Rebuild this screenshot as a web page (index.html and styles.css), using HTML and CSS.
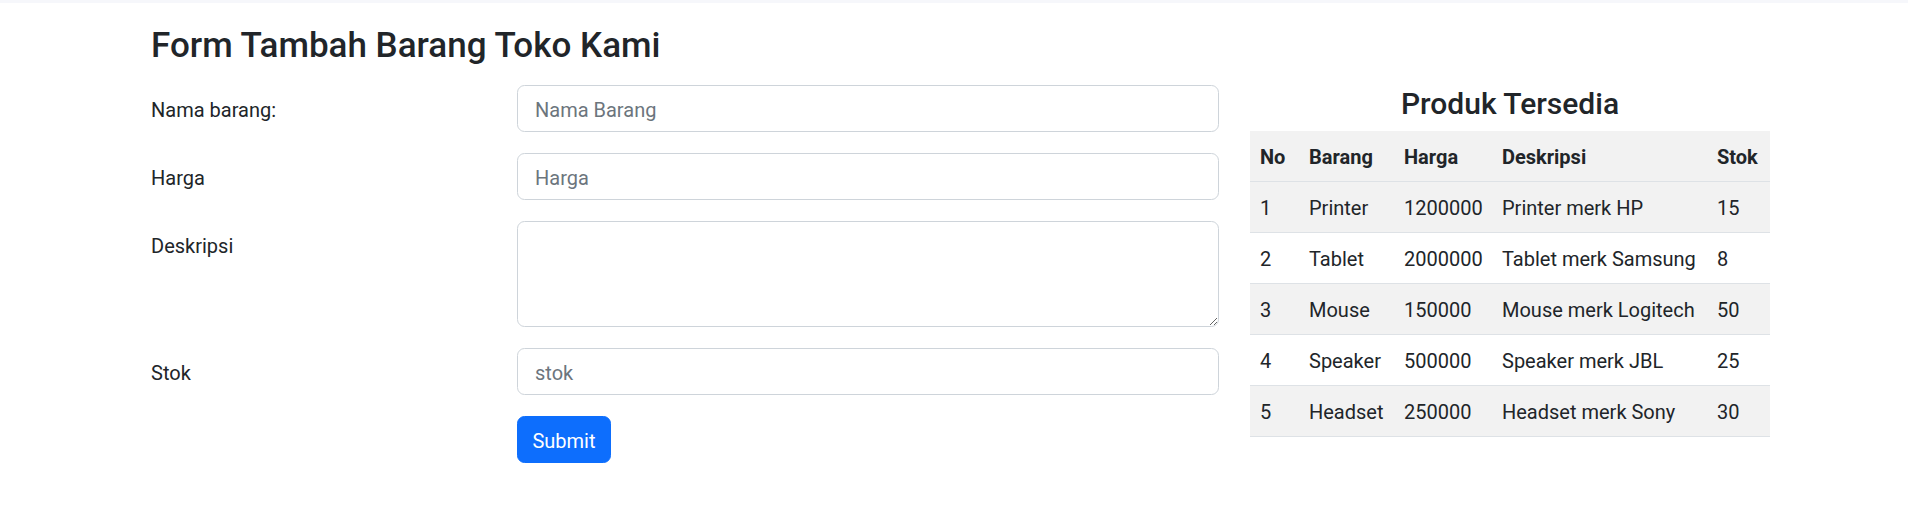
FILE: index.html
```html
<!DOCTYPE html>
<html lang="id">
<head>
<meta charset="utf-8">
<title>Form Tambah Barang Toko Kami</title>
<link rel="stylesheet" href="styles.css">
</head>
<body>
<div class="topbar"></div>
<div class="page">
  <h3 class="title">Form Tambah Barang Toko Kami</h3>
  <div class="main">
    <form class="form">
      <div class="row">
        <label class="label" for="nama">Nama barang:</label>
        <input class="control" id="nama" type="text" placeholder="Nama Barang">
      </div>
      <div class="row">
        <label class="label" for="harga">Harga</label>
        <input class="control" id="harga" type="text" placeholder="Harga">
      </div>
      <div class="row">
        <label class="label" for="deskripsi">Deskripsi</label>
        <textarea class="control area" id="deskripsi"></textarea>
      </div>
      <div class="row">
        <label class="label" for="stok">Stok</label>
        <input class="control" id="stok" type="text" placeholder="stok">
      </div>
      <div class="row">
        <span class="label"></span>
        <div><button class="btn" type="button">Submit</button></div>
      </div>
    </form>
    <div class="side">
      <h4 class="side-title">Produk Tersedia</h4>
      <table class="table">
        <colgroup>
          <col class="c-no"><col class="c-barang"><col class="c-harga"><col class="c-desk"><col class="c-stok">
        </colgroup>
        <thead>
          <tr><th>No</th><th>Barang</th><th>Harga</th><th>Deskripsi</th><th>Stok</th></tr>
        </thead>
        <tbody>
          <tr><td>1</td><td>Printer</td><td>1200000</td><td>Printer merk HP</td><td>15</td></tr>
          <tr><td>2</td><td>Tablet</td><td>2000000</td><td>Tablet merk Samsung</td><td>8</td></tr>
          <tr><td>3</td><td>Mouse</td><td>150000</td><td>Mouse merk Logitech</td><td>50</td></tr>
          <tr><td>4</td><td>Speaker</td><td>500000</td><td>Speaker merk JBL</td><td>25</td></tr>
          <tr><td>5</td><td>Headset</td><td>250000</td><td>Headset merk Sony</td><td>30</td></tr>
        </tbody>
      </table>
    </div>
  </div>
</div>
</body>
</html>
```
FILE: styles.css
```css
* { box-sizing: border-box; }

body {
  margin: 0;
  font-family: Roboto, "Liberation Sans", sans-serif;
  font-size: 20px;
  line-height: 1.5;
  color: #212529;
  background: #fff;
}

.topbar {
  height: 3px;
  background: #f6f7fb;
}

.page {
  padding-left: 151px;
}

.title {
  margin: 22px 0 18px;
  font-size: 35px;
  line-height: 42px;
  font-weight: 500;
}

.main {
  display: flex;
  align-items: flex-start;
  gap: 31px;
}

.form {
  width: 1068px;
}

.row {
  display: grid;
  grid-template-columns: 336px 702px;
  column-gap: 30px;
  margin-bottom: 21px;
}

.label {
  padding-top: 10px;
  line-height: 30px;
}

.control {
  display: block;
  width: 100%;
  height: 47px;
  margin: 0;
  padding: 3px 17px 0;
  font-family: inherit;
  font-size: 20px;
  color: #212529;
  background: #fff;
  border: 1px solid #ced4da;
  border-radius: 7.5px;
  outline: none;
}

.control::placeholder {
  color: #6c757d;
  opacity: 1;
}

.area {
  height: 106px;
  padding: 9px 17px;
  resize: vertical;
}

.btn {
  height: 47px;
  width: 94px;
  padding: 2px 0 0;
  font-family: inherit;
  font-size: 20px;
  color: #fff;
  background: #0d6efd;
  border: 1px solid #0d6efd;
  border-radius: 7.5px;
}

.side {
  width: 520px;
}

.side-title {
  margin: 0 0 10px;
  padding-top: 1px;
  height: 36px;
  font-size: 30px;
  line-height: 36px;
  font-weight: 500;
  text-align: center;
}

.table {
  width: 520px;
  border-collapse: collapse;
  table-layout: fixed;
}

.c-no { width: 49px; }
.c-barang { width: 95px; }
.c-harga { width: 98px; }
.c-desk { width: 215px; }
.c-stok { width: 63px; }

.table th,
.table td {
  padding: 11px 0 9px 10px;
  line-height: 30px;
  text-align: left;
  white-space: nowrap;
  border-bottom: 1px solid #dee2e6;
}

.table th {
  font-weight: 700;
}

.table thead tr,
.table tbody tr:nth-child(odd) {
  background: #f2f2f2;
}
```
